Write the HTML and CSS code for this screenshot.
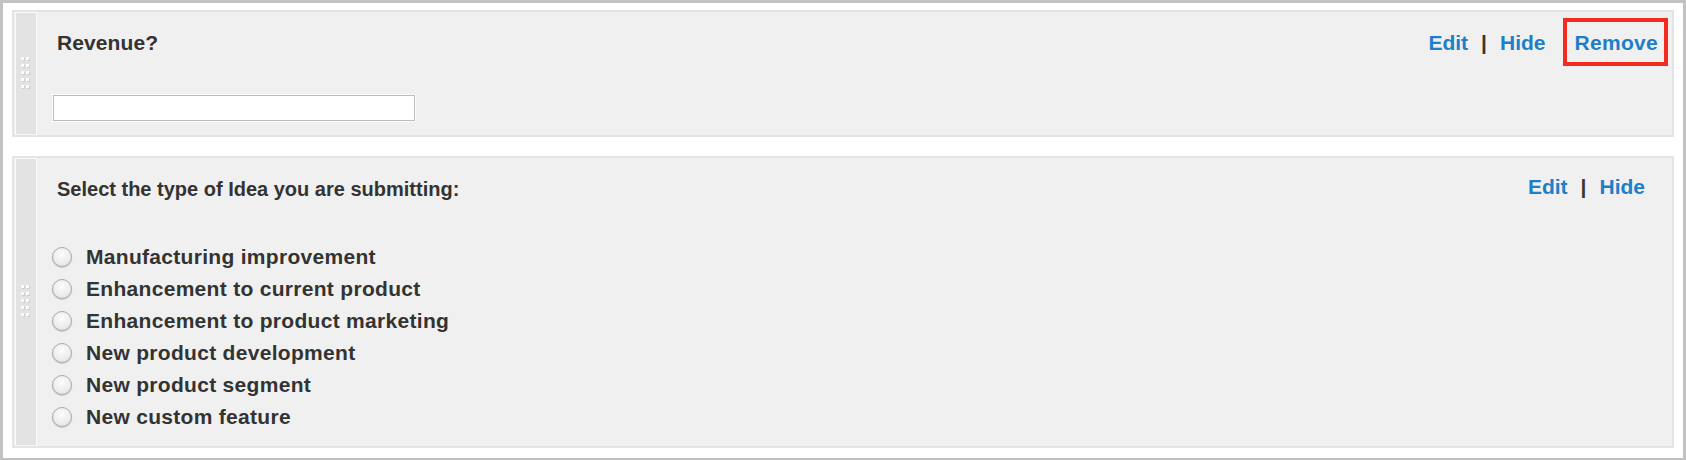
FILE: index.html
```html
<!DOCTYPE html>
<html lang="en">
<head>
<meta charset="utf-8">
<title>Form fields</title>
<link rel="stylesheet" href="styles.css">
</head>
<body>
<div class="frame">
  <section class="panel panel-short">
    <div class="handle">
      <svg class="grip" width="10" height="32" viewBox="0 0 10 32" aria-hidden="true">
        <g fill="#cfcfcf">
          <rect x="1" y="1" width="3" height="3"/><rect x="6" y="1" width="3" height="3"/>
          <rect x="1" y="8" width="3" height="3"/><rect x="6" y="8" width="3" height="3"/>
          <rect x="1" y="15" width="3" height="3"/><rect x="6" y="15" width="3" height="3"/>
          <rect x="1" y="22" width="3" height="3"/><rect x="6" y="22" width="3" height="3"/>
          <rect x="1" y="29" width="3" height="3"/><rect x="6" y="29" width="3" height="3"/>
        </g>
        <g fill="#fbfbfb">
          <rect x="0" y="0" width="3" height="3"/><rect x="5" y="0" width="3" height="3"/>
          <rect x="0" y="7" width="3" height="3"/><rect x="5" y="7" width="3" height="3"/>
          <rect x="0" y="14" width="3" height="3"/><rect x="5" y="14" width="3" height="3"/>
          <rect x="0" y="21" width="3" height="3"/><rect x="5" y="21" width="3" height="3"/>
          <rect x="0" y="28" width="3" height="3"/><rect x="5" y="28" width="3" height="3"/>
        </g>
      </svg>
    </div>
    <div class="content">
      <div class="header">
        <h2 class="title">Revenue?</h2>
        <nav class="actions">
          <a class="link" href="#">Edit</a>
          <span class="sep">|</span>
          <a class="link" href="#">Hide</a>
          <a class="link remove" href="#">Remove</a>
        </nav>
      </div>
      <input class="text-input" type="text" aria-label="Revenue">
    </div>
  </section>

  <section class="panel panel-tall">
    <div class="handle">
      <svg class="grip" width="10" height="32" viewBox="0 0 10 32" aria-hidden="true">
        <g fill="#cfcfcf">
          <rect x="1" y="1" width="3" height="3"/><rect x="6" y="1" width="3" height="3"/>
          <rect x="1" y="8" width="3" height="3"/><rect x="6" y="8" width="3" height="3"/>
          <rect x="1" y="15" width="3" height="3"/><rect x="6" y="15" width="3" height="3"/>
          <rect x="1" y="22" width="3" height="3"/><rect x="6" y="22" width="3" height="3"/>
          <rect x="1" y="29" width="3" height="3"/><rect x="6" y="29" width="3" height="3"/>
        </g>
        <g fill="#fbfbfb">
          <rect x="0" y="0" width="3" height="3"/><rect x="5" y="0" width="3" height="3"/>
          <rect x="0" y="7" width="3" height="3"/><rect x="5" y="7" width="3" height="3"/>
          <rect x="0" y="14" width="3" height="3"/><rect x="5" y="14" width="3" height="3"/>
          <rect x="0" y="21" width="3" height="3"/><rect x="5" y="21" width="3" height="3"/>
          <rect x="0" y="28" width="3" height="3"/><rect x="5" y="28" width="3" height="3"/>
        </g>
      </svg>
    </div>
    <div class="content">
      <div class="header">
        <h2 class="title title-long">Select the type of Idea you are submitting:</h2>
        <nav class="actions actions-wide">
          <a class="link" href="#">Edit</a>
          <span class="sep">|</span>
          <a class="link" href="#">Hide</a>
        </nav>
      </div>
      <ul class="options">
        <li class="option"><input class="radio" type="radio" name="idea" id="o1"><label for="o1">Manufacturing improvement</label></li>
        <li class="option"><input class="radio" type="radio" name="idea" id="o2"><label for="o2">Enhancement to current product</label></li>
        <li class="option"><input class="radio" type="radio" name="idea" id="o3"><label for="o3">Enhancement to product marketing</label></li>
        <li class="option"><input class="radio" type="radio" name="idea" id="o4"><label for="o4">New product development</label></li>
        <li class="option"><input class="radio" type="radio" name="idea" id="o5"><label for="o5">New product segment</label></li>
        <li class="option"><input class="radio" type="radio" name="idea" id="o6"><label for="o6">New custom feature</label></li>
      </ul>
    </div>
  </section>
</div>
</body>
</html>
```

FILE: styles.css
```css
html, body {
  margin: 0;
  padding: 0;
  background: #ffffff;
}

body {
  font-family: "Liberation Sans", Arial, Helvetica, sans-serif;
  color: #333333;
}

.frame {
  width: 1686px;
  height: 460px;
  box-sizing: border-box;
  border: 3px solid #c2c2c2;
  border-bottom-width: 2px;
  padding: 7px 9px 0 9px;
  display: flex;
  flex-direction: column;
  gap: 19px;
  background: #ffffff;
}

.panel {
  display: flex;
  border: 2px solid #e4e4e4;
  background: #f0f0f0;
}

.handle {
  width: 20px;
  flex: 0 0 auto;
  margin-left: 1px;
  border: 1px solid #fafafa;
  border-bottom-color: #f6f6f6;
  background: #e3e3e3;
  display: flex;
  align-items: center;
  justify-content: center;
}

.grip {
  display: block;
  margin-top: -2px;
}

.content {
  flex: 1 1 auto;
  padding: 19px 0 13px 15px;
  display: flex;
  flex-direction: column;
  align-items: flex-start;
}

.header {
  align-self: stretch;
  display: flex;
  justify-content: space-between;
  align-items: baseline;
}

.title {
  margin: 0;
  padding-left: 5px;
  font-size: 21px;
  line-height: 24px;
  font-weight: bold;
  color: #333333;
  letter-spacing: 0.1px;
}

.title-long {
  font-size: 20px;
  letter-spacing: 0;
}

.actions {
  display: flex;
  align-items: baseline;
  gap: 13px;
  margin-right: 14px;
  font-size: 21px;
  line-height: 24px;
  font-weight: bold;
}

.actions-wide {
  margin-right: 27px;
  position: relative;
  top: -2px;
}

.link {
  color: #1e7fc8;
  text-decoration: none;
}

.sep {
  color: #3a3330;
}

.remove {
  position: relative;
  margin-left: 16px;
  letter-spacing: 0.3px;
}

.remove::after {
  content: "";
  position: absolute;
  left: -11px;
  right: -10px;
  top: -13px;
  bottom: -11px;
  border: 4px solid #f42a1e;
}

.text-input {
  margin: 40px 0 1px 1px;
  width: 362px;
  height: 26px;
  box-sizing: border-box;
  border: 1px solid #bdbdbd;
  outline: 1px solid #fbfbfb;
  background: #ffffff;
  padding: 0 4px;
  font: inherit;
}

.options {
  list-style: none;
  margin: 40px 0 0 0;
  padding: 0;
}

.option {
  display: flex;
  align-items: center;
  height: 32px;
  font-size: 21px;
  line-height: 32px;
  font-weight: bold;
  color: #333333;
  letter-spacing: 0.3px;
}

.radio {
  appearance: none;
  -webkit-appearance: none;
  margin: 0 14px 0 0;
  width: 20px;
  height: 20px;
  box-sizing: border-box;
  border-radius: 50%;
  border: 1px solid #a9a9a9;
  background: radial-gradient(circle at 50% 35%, #fbfbfb 0%, #eeeeee 55%, #dcdcdc 100%);
  box-shadow: 0 1px 1px rgba(0, 0, 0, 0.18);
  flex: 0 0 auto;
}
```
